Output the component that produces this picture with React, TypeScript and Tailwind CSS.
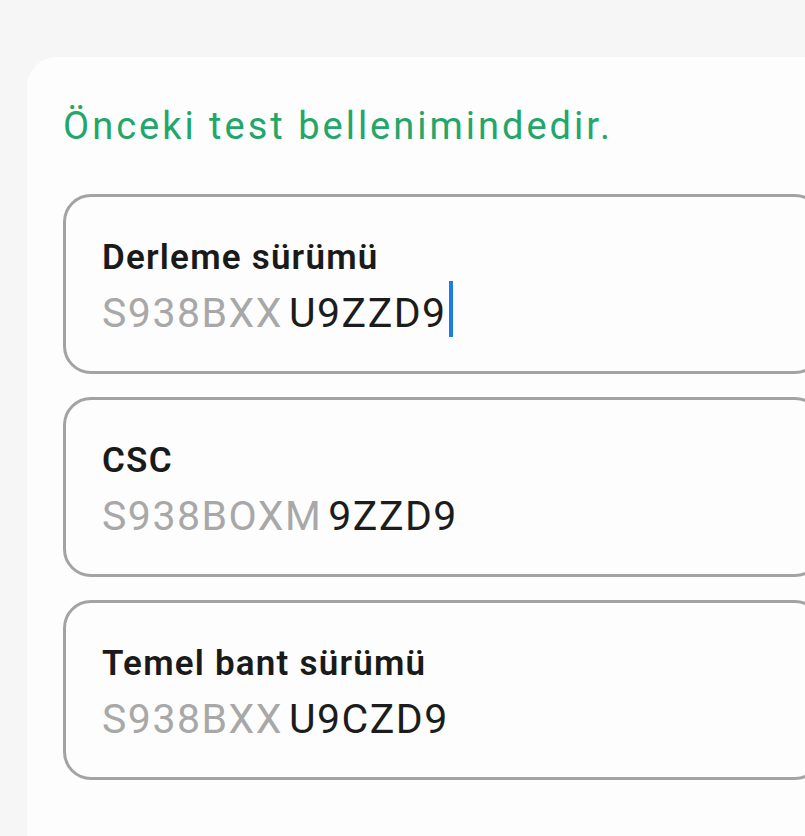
const fields = [
  { label: "Derleme sürümü", prefix: "S938BXX", suffix: "U9ZZD9", focused: true },
  { label: "CSC", prefix: "S938BOXM", suffix: "9ZZD9", focused: false },
  { label: "Temel bant sürümü", prefix: "S938BXX", suffix: "U9CZD9", focused: false },
];

function VersionField({
  label,
  prefix,
  suffix,
  focused,
}: {
  label: string;
  prefix: string;
  suffix: string;
  focused: boolean;
}) {
  return (
    <div className="w-[760px] rounded-[28px] border-[3px] border-[#a3a3a3] pt-[41px] pb-[34px] pl-[36px]">
      <div className="text-[35px] leading-[40px] font-semibold tracking-[1.2px] text-[#1a1a1a]">{label}</div>
      <div className="mt-[11px] text-[41px] leading-[48px] tracking-[1.5px] whitespace-nowrap">
        <span className="text-[#a8a8a8]">{prefix}</span>
        <span className="ml-[6px] text-[#1c1c1c]">{suffix}</span>
        {focused && (
          <span className="ml-[2px] -mt-[10px] inline-block h-[56px] w-[4px] bg-[#1a7fe0] align-[-10px]" />
        )}
      </div>
    </div>
  );
}

export default function App() {
  return (
    <div
      className="h-[836px] w-[805px] overflow-hidden bg-[#f6f6f6] pt-[57px] pl-[27px]"
      style={{ fontFamily: "Roboto, 'Noto Sans', sans-serif" }}
    >
      <div className="min-h-[900px] w-[840px] rounded-tl-[30px] bg-[#fdfdfd] pt-[47px] pl-[36px]">
        <p className="text-[38px] leading-[44px] tracking-[3px] text-[#23a669]">Önceki test bellenimindedir.</p>
        <div className="mt-[46px] flex flex-col gap-[23px]">
          {fields.map((f) => (
            <VersionField key={f.label} {...f} />
          ))}
        </div>
      </div>
    </div>
  );
}
